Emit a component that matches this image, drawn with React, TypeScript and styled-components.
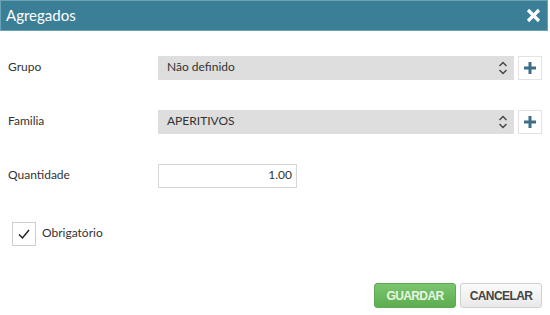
import React from "react";
import styled, { createGlobalStyle } from "styled-components";

const Global = createGlobalStyle`
  html, body { margin: 0; padding: 0; background: #fff; }
  body { font-family: Lato, "Liberation Sans", Arial, sans-serif; }
`;

const Dialog = styled.div`
  width: 550px;
  height: 315px;
  background: #fff;
  box-sizing: border-box;
  display: flex;
  flex-direction: column;
`;

const Header = styled.div`
  height: 31px;
  width: 548px;
  box-sizing: border-box;
  background: #3a7f96;
  border: 1px solid #6aa3b6;
  display: flex;
  align-items: center;
  justify-content: space-between;
  padding: 0 6px 0 5px;
`;

const Title = styled.div`
  color: #fff;
  font-size: 15px;
  margin-top: -2px;
`;

const Close = styled.button`
  border: 0;
  background: none;
  padding: 0;
  width: 16px;
  height: 16px;
  display: flex;
  align-items: center;
  justify-content: center;
`;

const Body = styled.div`
  display: flex;
  flex-direction: column;
  padding: 25px 8px 0 8px;
`;

const Row = styled.div<{ $mb: number }>`
  display: flex;
  align-items: center;
  height: 24px;
  margin-bottom: ${(p) => p.$mb}px;
`;

const Text = styled.span`
  font-size: 12px;
  color: #333;
  line-height: 14px;
  margin-top: -2px;
`;

const Label = styled(Text)`
  width: 150px;
`;

const Select = styled.div`
  width: 356px;
  height: 24px;
  background: #dedede;
  display: flex;
  align-items: center;
  justify-content: space-between;
  box-sizing: border-box;
  padding: 0 6px 0 9px;
`;

const AddBtn = styled.div`
  width: 24px;
  height: 24px;
  margin-left: 4px;
  box-sizing: border-box;
  border: 1px solid #e2e2e2;
  background: #fff;
  display: flex;
  align-items: center;
  justify-content: center;
`;

const Input = styled.div`
  width: 139px;
  height: 24px;
  box-sizing: border-box;
  border: 1px solid #d6d6d6;
  display: flex;
  align-items: center;
  justify-content: flex-end;
  padding-right: 4px;
`;

const CheckRow = styled.div`
  display: flex;
  align-items: center;
  margin-left: 4px;
  gap: 6px;
`;

const CheckBox = styled.div`
  width: 24px;
  height: 24px;
  box-sizing: border-box;
  border: 1px solid #cfcfcf;
  display: flex;
  align-items: center;
  justify-content: center;
`;

const Footer = styled.div`
  display: flex;
  justify-content: flex-end;
  gap: 4px;
  padding-right: 8px;
  margin-top: 37px;
`;

const Btn = styled.button<{ $primary?: boolean }>`
  width: 82px;
  height: 25px;
  border-radius: 3px;
  font-family: "Liberation Sans", Arial, sans-serif;
  font-weight: bold;
  font-size: 12px;
  letter-spacing: -0.6px;
  padding: 0;
  border: 1px solid ${(p) => (p.$primary ? "#5fa855" : "#d0d0d0")};
  color: ${(p) => (p.$primary ? "#e8f5e4" : "#444")};
  background: ${(p) =>
    p.$primary
      ? "linear-gradient(#7cc56f, #5cae4f)"
      : "linear-gradient(#fbfbfb, #e9e9e9)"};
`;

const UpDown = () => (
  <svg width="10" height="14" viewBox="0 0 10 14">
    <path d="M1.5 5 L5 1.5 L8.5 5" fill="none" stroke="#444" strokeWidth="1.4" />
    <path d="M1.5 9 L5 12.5 L8.5 9" fill="none" stroke="#444" strokeWidth="1.4" />
  </svg>
);

const Plus = () => (
  <svg width="14" height="14" viewBox="0 0 14 14">
    <path d="M7 1 V13 M1 7 H13" stroke="#3d6e88" strokeWidth="3" />
  </svg>
);

export default function App() {
  return (
    <>
      <Global />
      <Dialog>
        <Header>
          <Title>Agregados</Title>
          <Close>
            <svg width="15" height="15" viewBox="0 0 15 15">
              <path d="M2 2 L13 13 M13 2 L2 13" stroke="#fff" strokeWidth="3.2" />
            </svg>
          </Close>
        </Header>
        <Body>
          <Row $mb={30}>
            <Label>Grupo</Label>
            <Select>
              <Text>Não definido</Text>
              <UpDown />
            </Select>
            <AddBtn>
              <Plus />
            </AddBtn>
          </Row>
          <Row $mb={30}>
            <Label>Familia</Label>
            <Select>
              <Text>APERITIVOS</Text>
              <UpDown />
            </Select>
            <AddBtn>
              <Plus />
            </AddBtn>
          </Row>
          <Row $mb={34}>
            <Label>Quantidade</Label>
            <Input>
              <Text>1.00</Text>
            </Input>
          </Row>
          <CheckRow>
            <CheckBox>
              <svg width="14" height="14" viewBox="0 0 14 14">
                <path d="M2 7.5 L5.5 11 L12 3" fill="none" stroke="#222" strokeWidth="1.5" />
              </svg>
            </CheckBox>
            <Text>Obrigatório</Text>
          </CheckRow>
        </Body>
        <Footer>
          <Btn $primary>GUARDAR</Btn>
          <Btn>CANCELAR</Btn>
        </Footer>
      </Dialog>
    </>
  );
}
